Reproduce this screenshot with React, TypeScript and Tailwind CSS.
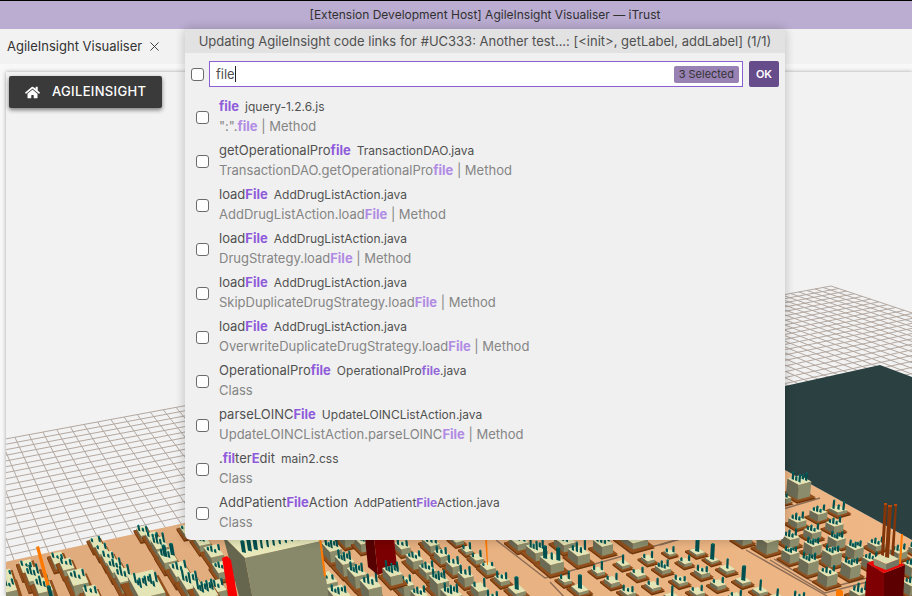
import React from "react";
import { FaHome } from "react-icons/fa";

type Point = [number, number];

/* ---------- City scene ---------- */

const CORNER: Point = [831, 286];
const VANISH_RIGHT: Point = [3286, -169];
const VANISH_LEFT: Point = [-213, -61];

const floorPoint = (k: number, m: number): Point => {
  const d = 1 - k - m;
  return [
    (CORNER[0] - k * VANISH_RIGHT[0] - m * VANISH_LEFT[0]) / d,
    (CORNER[1] - k * VANISH_RIGHT[1] - m * VANISH_LEFT[1]) / d,
  ];
};

const pts = (list: Point[]) => list.map(([x, y]) => `${x.toFixed(1)},${y.toFixed(1)}`).join(" ");

function FloorGrid() {
  const lines: [Point, Point][] = [];
  for (let i = 0; i <= 90; i++) lines.push([floorPoint(i * 0.00324, 0), floorPoint(i * 0.00324, 0.36)]);
  for (let j = 0; j <= 50; j++) lines.push([floorPoint(0, j * 0.0073), floorPoint(0.32, j * 0.0073)]);
  return (
    <g stroke="#b3a8a0" strokeWidth="1">
      {lines.map(([a, b], i) => (
        <line key={i} x1={a[0]} y1={a[1]} x2={b[0]} y2={b[1]} />
      ))}
    </g>
  );
}

const toward = (from: Point, to: Point): Point => {
  const dx = to[0] - from[0];
  const dy = to[1] - from[1];
  const n = Math.hypot(dx, dy);
  return [dx / n, dy / n];
};

const quad = (c: Point, half: number, lift = 0): Point[] => {
  const a = toward(c, VANISH_RIGHT);
  const b = toward(VANISH_LEFT, c);
  const unit = half / (a[0] + b[0]);
  const lean = ((c[0] - 600) / 2200) * lift;
  const at = (s: number, t: number): Point => [
    c[0] + (s * a[0] + t * b[0]) * unit + lean,
    c[1] + (s * a[1] + t * b[1]) * unit - lift,
  ];
  return [at(-1, -1), at(1, -1), at(1, 1), at(-1, 1)];
};

/* x, y of the footprint's centre, half width, height, number of towers, tower height */
type Building = [number, number, number, number, number, number];

const BUILDINGS: Building[] = [
  [10, 592, 9, 7, 4, 5], [8, 578, 6, 4, 2, 3], [28, 571, 8, 5, 3, 4], [35, 581, 9, 7, 4, 9], [45, 593, 10, 8, 4, 9],
  [59, 563, 8, 5, 3, 4], [68, 570, 8, 6, 3, 5], [80, 587, 11, 10, 4, 6], [93, 600, 9, 8, 3, 6],
  [97, 546, 7, 4, 2, 5], [103, 554, 7, 5, 2, 5], [110, 563, 8, 6, 3, 5], [117, 573, 9, 7, 4, 7], [126, 586, 10, 11, 4, 9],
  [149, 597, 19, 13, 9, 9], [144, 535, 7, 4, 3, 5], [154, 542, 8, 5, 3, 5], [161, 552, 9, 9, 4, 9], [169, 564, 10, 8, 4, 11],
  [181, 577, 11, 8, 4, 7], [192, 590, 12, 9, 5, 10], [187, 533, 7, 4, 2, 4], [203, 546, 9, 6, 4, 5], [215, 559, 10, 8, 4, 5],
  [207, 598, 13, 8, 7, 10], [222, 574, 9, 7, 4, 5], [218, 593, 10, 7, 4, 6],
  [328, 589, 11, 11, 3, 4], [340, 602, 12, 10, 5, 6], [347, 543, 8, 8, 4, 6], [333, 557, 10, 11, 5, 7], [346, 571, 10, 12, 5, 8],
  [358, 583, 10, 12, 5, 8], [372, 597, 11, 14, 4, 9], [363, 548, 8, 8, 4, 6], [403, 551, 8, 6, 3, 5], [415, 565, 9, 8, 4, 5],
  [393, 580, 10, 9, 5, 9], [406, 592, 9, 10, 4, 6], [428, 575, 9, 7, 4, 6], [430, 546, 8, 5, 4, 4], [420, 602, 9, 9, 4, 6],
  [438, 587, 8, 7, 3, 5], [432, 549, 8, 7, 3, 5], [442, 560, 8, 7, 3, 6], [454, 571, 8, 8, 3, 7], [466, 583, 8, 9, 3, 8],
  [440, 592, 10, 14, 5, 8], [452, 604, 11, 12, 5, 8], [480, 595, 9, 8, 2, 8], [493, 605, 8, 7, 3, 7],
  [457, 542, 7, 3, 2, 5], [467, 552, 6, 3, 2, 6], [477, 561, 7, 4, 2, 6], [488, 571, 8, 5, 2, 3], [502, 582, 8, 4, 3, 6],
  [517, 593, 9, 4, 1, 12], [519, 546, 10, 6, 3, 4], [537, 556, 11, 8, 5, 8], [552, 568, 12, 9, 3, 12], [565, 547, 11, 7, 4, 5],
  [579, 560, 11, 9, 4, 9], [603, 551, 10, 9, 4, 6], [634, 543, 14, 6, 5, 4],
  [565, 582, 7, 3, 2, 7], [580, 591, 9, 3, 1, 13], [598, 573, 7, 3, 2, 8], [623, 566, 7, 3, 1, 8], [648, 561, 7, 3, 2, 6],
  [612, 584, 8, 4, 2, 6], [638, 576, 8, 3, 2, 5], [663, 571, 8, 4, 4, 6], [653, 588, 8, 3, 2, 6], [628, 594, 8, 3, 3, 5],
  [670, 554, 6, 2, 2, 5], [697, 553, 8, 2, 1, 11], [685, 564, 7, 3, 2, 5], [712, 561, 7, 2, 1, 15], [727, 571, 8, 3, 1, 9],
  [702, 575, 8, 4, 3, 5], [743, 583, 8, 3, 1, 14], [680, 583, 8, 3, 3, 4], [718, 587, 8, 4, 2, 5], [760, 593, 8, 3, 1, 10],
  [697, 594, 8, 3, 2, 5], [736, 599, 8, 3, 2, 5], [777, 600, 8, 3, 1, 8], [672, 599, 8, 3, 1, 10], [799, 600, 8, 3, 3, 5],
  [743, 542, 9, 6, 3, 4], [767, 550, 11, 12, 5, 4], [786, 502, 5, 5, 1, 3],
  [798, 495, 12, 15, 5, 7], [818, 518, 9, 7, 4, 5], [838, 512, 9, 3, 3, 8], [797, 525, 9, 6, 4, 6], [834, 530, 9, 7, 4, 5],
  [812, 537, 9, 7, 4, 5], [790, 544, 9, 8, 4, 6], [836, 546, 9, 9, 5, 5], [812, 553, 9, 10, 5, 5], [790, 560, 9, 9, 5, 4],
  [854, 556, 9, 10, 5, 5], [831, 563, 10, 12, 5, 5], [808, 571, 10, 12, 5, 6], [850, 575, 10, 12, 5, 5], [827, 583, 10, 11, 4, 5],
  [876, 548, 9, 5, 4, 5], [898, 557, 9, 7, 4, 5], [870, 566, 9, 8, 4, 5], [859, 596, 10, 5, 4, 8], [914, 552, 6, 5, 3, 4],
  [911, 573, 9, 9, 4, 5], [910, 592, 9, 10, 4, 5],
];

function Tower({ x, y, h }: { x: number; y: number; h: number }) {
  const tilt = ((x - 600) / 2200) * h;
  const w = h > 10 ? 2 : 1.1;
  return (
    <g>
      <polygon fill="#00504f" points={pts([[x - w, y], [x - w + tilt, y - h], [x + w + tilt, y - h], [x + w, y + 1]])} />
      <polygon fill="#00706c" points={pts([[x - w + tilt, y - h], [x + tilt, y - h - 1], [x + w + tilt, y - h], [x + tilt, y - h + 1]])} />
    </g>
  );
}

function Block({ data: [x, y, half, height, towers, towerHeight] }: { data: Building }) {
  const plate = quad([x, y], half * 1.5);
  const foot = quad([x, y], half);
  const top = quad([x, y], half, height);
  const low = plate.map(([px, py]): Point => [px, py + 1.5]);
  return (
    <g>
      <polygon fill="#6f350b" points={pts([plate[0], plate[1], low[1], low[2], low[3], low[0]])} />
      <polygon fill="#91501d" points={pts(plate)} />
      <polygon fill="#6b6b55" points={pts([top[0], top[3], foot[3], foot[0]])} />
      <polygon fill="#8a8c6c" points={pts([top[3], top[2], foot[2], foot[3]])} />
      <polygon fill="#e4e5b6" points={pts(top)} />
      {Array.from({ length: towers }, (_, i) => {
        const s = towers === 1 ? 0 : (i / (towers - 1)) * 1.1 - 0.55;
        const t = towers === 1 ? 0 : ((i * 7) % 5) / 5 - 0.4;
        const px = x + ((x - 600) / 2200) * height + s * half;
        const py = y - height - s * half * 0.1 + t * half * 0.35;
        return <Tower key={i} x={px} y={py} h={i % 2 === towers % 2 ? towerHeight * 0.5 : towerHeight} />;
      })}
    </g>
  );
}

function CityScene() {
  const sorted = [...BUILDINGS].sort((a, b) => a[1] - b[1]);
  return (
    <svg
      className="block h-full w-full"
      viewBox="6 72 906 524"
      preserveAspectRatio="xMinYMin slice"
      role="img"
      aria-label="Code city"
    >
      <defs>
        <linearGradient id="ground" x1="0" x2="1">
          <stop offset="0" stopColor="#dfab7d" />
          <stop offset="1" stopColor="#efb785" />
        </linearGradient>
      </defs>
      <FloorGrid />
      <polygon fill="url(#ground)" points="0,563 185,523 640,420 700,423 785,470 912,540 912,600 0,600" />
      <polygon fill="#2b4040" points="640,420 785,386 880,365 912,377 912,540 785,470 700,424" />
      <g fill="none" stroke="#8c6c55" strokeWidth="1.4">
        <path d="M496 540L545 578L623 556M550 582L567 600M612 538L630 553L680 539" />
        <path d="M746 550L827 596M770 560L825 593L867 582M774 559L825 589L867 578" />
        <path d="M780 510L820 498M660 545L680 539M908 566L912 564" />
      </g>
      {sorted.map((data, i) => (
        <Block key={i} data={data} />
      ))}

      <polygon fill="#e8e8bb" points="223,536 318,520 322,541 245,558" />
      <polygon fill="#66664f" points="223,536 245,558 253,600 240,600" />
      <polygon fill="#87896a" points="245,558 321,541 329,600 253,600" />
      {Array.from({ length: 12 }, (_, i) => (
        <Tower key={i} x={244 + i * 6} y={552 - i * 1.4} h={i < 3 ? 11 : 8} />
      ))}
      <polygon fill="#560002" points="365,538 374,538 378,575 368,567" />
      <polygon fill="#7b0002" points="374,538 394,538 397,567 378,575" />
      <Block data={[393, 580, 10, 9, 5, 9]} />
      <polygon fill="#ff7900" points="319,538 321,538 326,576 324,577" />
      <polygon fill="#ff7900" points="485,538 487,538 488,565 487,565" />
      <polygon fill="#ff7900" points="36,547 39,546 50,586 50,600" />
      <polygon fill="#fb0000" points="222,558 227,556 231,560 238,600 229,600" />
      <Tower x={52} y={600} h={14} />

      <polygon fill="#7f0002" points="867,563 884,573 884,600 865,600" />
      <polygon fill="#5d0002" points="884,573 905,565 903,600 884,600" />
      <polygon fill="#ed0508" points="867,563 888,555 905,565 884,573" />
      <polygon fill="#8f9073" points="873,558 886,564 886,570 874,565" />
      <polygon fill="#747560" points="886,564 899,559 899,565 886,570" />
      <polygon fill="#dfdfb2" points="873,558 886,552 899,559 886,564" />
      <g fill="#823509">
        <polygon points="884,504 887,504 884,556 881,555" />
        <polygon points="888,506 892,506 889,558 885,557" />
        <polygon points="895,505 897,505 894,556 891,555" />
      </g>
      <path fill="#ba4a0b" d="M884 503h3v2h-3zM888 505h4v2h-4zM894 504h3v2h-3z" />
      <polygon fill="#ff7900" points="901,534 903,534 901,564 899,564" />
      <path fill="#ff7900" d="M836 590l3-1 4 2v9h-7z" />
    </svg>
  );
}

/* ---------- Quick pick ---------- */

interface Item {
  name: string;
  file: string;
  detail: string;
}

/* Asterisks enclose the matched characters. */
const ITEMS: Item[] = [
  { name: "*file*", file: "jquery-1.2.6.js", detail: '":".*file* | Method' },
  { name: "getOperationalPro*file*", file: "TransactionDAO.java", detail: "TransactionDAO.getOperationalPro*file* | Method" },
  { name: "load*File*", file: "AddDrugListAction.java", detail: "AddDrugListAction.load*File* | Method" },
  { name: "load*File*", file: "AddDrugListAction.java", detail: "DrugStrategy.load*File* | Method" },
  { name: "load*File*", file: "AddDrugListAction.java", detail: "SkipDuplicateDrugStrategy.load*File* | Method" },
  { name: "load*File*", file: "AddDrugListAction.java", detail: "OverwriteDuplicateDrugStrategy.load*File* | Method" },
  { name: "OperationalPro*file*", file: "OperationalPro*file*.java", detail: "Class" },
  { name: "parseLOINC*File*", file: "UpdateLOINCListAction.java", detail: "UpdateLOINCListAction.parseLOINC*File* | Method" },
  { name: ".*fil*ter*E*dit", file: "main2.css", detail: "Class" },
  { name: "AddPatient*File*Action", file: "AddPatient*File*Action.java", detail: "Class" },
];

function Marked({ text, tone }: { text: string; tone: string }) {
  return (
    <>
      {text.split("*").map((part, i) =>
        i % 2 ? (
          <b key={i} className={`font-bold ${tone}`}>
            {part}
          </b>
        ) : (
          part
        ),
      )}
    </>
  );
}

const CHECKBOX =
  "size-[13px] shrink-0 appearance-none rounded-[3px] border border-[#6b6b6b] bg-white checked:bg-[#674c8c]";

function QuickPick() {
  return (
    <section
      aria-label="Update code links"
      className="w-[600px] overflow-hidden rounded-md bg-[#f0f0f0] pb-[5px] text-[13px] text-[#505050] shadow-[0_0_8px_2px_rgba(0,0,0,0.16)]"
    >
      <h1 className="h-6 bg-[#e2e2e2] text-center leading-6 whitespace-nowrap">
        Updating AgileInsight code links for #UC333: Another test...: [&lt;init&gt;, getLabel, addLabel] (1/1)
      </h1>
      <form className="flex items-center px-1.5 py-2" onSubmit={(e) => e.preventDefault()}>
        <input type="checkbox" aria-label="Select all" className={CHECKBOX} />
        <div className="ml-[5px] flex h-[26px] flex-1 items-center border border-[#8c5fd0] bg-white pr-[3px] pl-1.5">
          <div className="flex flex-1 items-center">
            <input
              aria-label="Filter"
              defaultValue="file"
              className="field-sizing-content bg-transparent leading-4 outline-none"
            />
            <span className="h-4 w-px bg-[#222]" />
          </div>
          <span className="rounded-xs bg-[#9882b3] px-[5px] text-[11px] leading-[17px] text-[#333]">3 Selected</span>
        </div>
        <button type="submit" className="ml-1.5 h-[26px] w-[30px] rounded-xs bg-[#674c8c] text-[11px] font-semibold text-white">
          OK
        </button>
      </form>
      <ul>
        {ITEMS.map((item, i) => (
          <li key={i}>
            <label className="flex h-11 items-center gap-2.5 pl-[11px]">
              <input type="checkbox" className={CHECKBOX} />
              <span className="pb-0.5 leading-5 whitespace-nowrap">
                <span className="block h-5">
                  <Marked text={item.name} tone="text-[#8f5bdb]" />
                  <span className="ml-1.5 text-[12px]">
                    <Marked text={item.file} tone="text-[#9468d8]" />
                  </span>
                </span>
                <span className="block h-5 text-[#858585]">
                  <Marked text={item.detail} tone="text-[#b18be4]" />
                </span>
              </span>
            </label>
          </li>
        ))}
      </ul>
    </section>
  );
}

export default function App() {
  return (
    <div className="relative flex h-screen flex-col overflow-hidden bg-[#f8f8f8] font-['Inter','Liberation_Sans',sans-serif]">
      <header className="h-[29px] shrink-0 border-t border-black bg-[#bbadd1] pl-[58px] text-center text-[12px] leading-7 text-[#303030]">
        [Extension Development Host] AgileInsight Visualiser — iTrust
      </header>
      <nav className="flex h-[35px] shrink-0 items-center bg-[#f2f2f2]">
        <div className="flex items-center gap-1 pl-[7px] text-[13px] text-[#333]">
          AgileInsight Visualiser
          <button type="button" aria-label="Close tab" className="grid size-4 place-items-center">
            <svg viewBox="0 0 10 10" className="size-[9px]" stroke="#424242" strokeWidth="1.1">
              <path d="M0.5 0.5L9.5 9.5M9.5 0.5L0.5 9.5" />
            </svg>
          </button>
        </div>
      </nav>
      <main className="relative mt-2 ml-1.5 min-h-0 flex-1 bg-[#f2f2f2] shadow-[0_0_4px_rgba(0,0,0,0.35)]">
        <CityScene />
        <button
          type="button"
          className="absolute top-1 left-[3px] flex h-8 w-[153px] items-center gap-3 rounded-xs bg-[#3a3a3a] pl-4 text-[13px] font-medium tracking-wide text-white shadow-[0_2px_4px_rgba(0,0,0,0.5)]"
        >
          <FaHome className="size-[15px]" />
          AGILEINSIGHT
        </button>
      </main>
      <div className="absolute inset-x-0 top-[29px] flex justify-center pl-[58px]">
        <QuickPick />
      </div>
    </div>
  );
}
